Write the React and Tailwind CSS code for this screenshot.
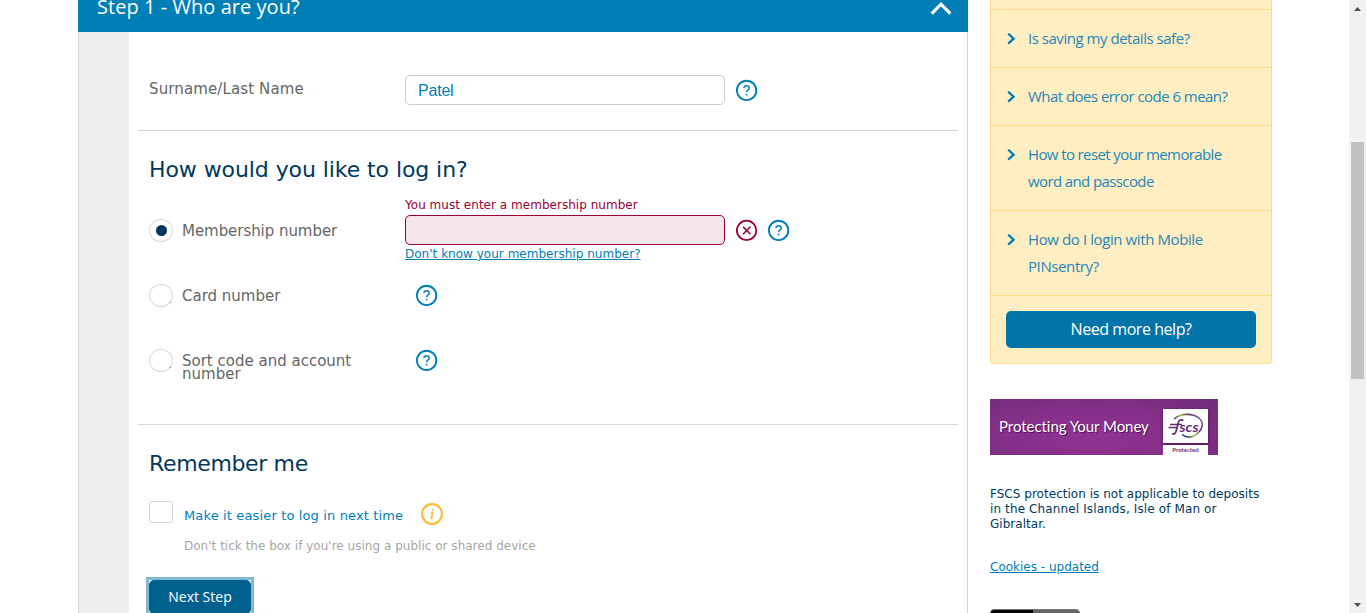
import React from "react";

const VERDANA = "font-['DejaVu_Sans',sans-serif]";
const EXPERT = "font-['Open_Sans',sans-serif]";

function HelpIcon({ className = "" }) {
  return (
    <svg viewBox="0 0 22 22" className={`h-[22px] w-[22px] shrink-0 ${className}`} fill="none" stroke="#007eb6">
      <circle cx="10.6" cy="11.4" r="9.7" strokeWidth="1.9" />
      <path d="M7.900 8.900C8.100 7.400 9.100 6.700 10.500 6.700c1.600 0 2.700.8 2.700 2.200 0 2.100-2.600 2.200-2.600 4.300" strokeWidth="1.5" />
      <path d="M9.800 15.600h1.600" strokeWidth="1.6" />
    </svg>
  );
}

function ErrorIcon() {
  return (
    <svg viewBox="0 0 22 22" className="h-[22px] w-[22px] shrink-0" fill="none" stroke="#990033">
      <circle cx="10.6" cy="11.400" r="9.7" strokeWidth="1.8" />
      <path d="M7 7.800l7.400 7.400M14.400 7.800l-7.400 7.400" strokeWidth="1.6" />
    </svg>
  );
}

function InfoIcon() {
  return (
    <svg viewBox="0 0 22 22" className="h-[22px] w-[22px] shrink-0">
      <circle cx="11" cy="11" r="9.9" strokeWidth="2" fill="none" stroke="#fdb92c" />
      <text x="11" y="15.6" textAnchor="middle" fill="#fdb92c" className="font-['Liberation_Serif',serif] text-[15px] italic" stroke="#fdb92c" strokeWidth=".3">i</text>
    </svg>
  );
}

function Radio({ checked }) {
  return (
    <span className="flex h-[23px] w-6 shrink-0 items-center justify-center rounded-[50%] border border-[#d9d9d9] bg-white">
      {checked && <span className="h-[11px] w-[11px] rounded-full bg-[#00395d]" />}
    </span>
  );
}

function FaqItem({ children, className }) {
  return (
    <li className="flex border-t border-[#ffdb87] pt-[15px] pb-[15px] pl-[15px]">
      <svg viewBox="0 0 10 12" className="mt-2 h-3 w-[10px] shrink-0" fill="none" stroke="#007eb6" strokeWidth="2.3">
        <path d="M2.200 .7L7.600 5.700 2.200 10.700" />
      </svg>
      <span className={`ml-[12px] text-[15px] leading-[27px] whitespace-nowrap text-[#2587b8] ${className}`}>{children}</span>
    </li>
  );
}

export default function App() {
  return (
    <div className={`flex h-[613px] w-[1366px] overflow-hidden bg-white pl-[78px] ${VERDANA}`}>
      <main className="flex h-full w-[890px] shrink-0 flex-col">
        <header className={`flex h-8 shrink-0 justify-between bg-[#007eb6] pr-4 pl-[19px] text-white ${EXPERT}`}>
          <h2 className="-mt-[8px] text-[20px] leading-[30px] font-normal tracking-[0.05px] whitespace-nowrap">Step 1 - Who are you?</h2>
          <svg viewBox="0 0 22 16" className="h-4 w-[22px]" fill="none" stroke="#fff" strokeWidth="3.2">
            <path d="M1.7 13.6L11 4.2l9.3 9.4" />
          </svg>
        </header>
        <div className="flex flex-1 border-x border-[#d5d5d5]">
          <div className="w-[50px] shrink-0 bg-[#ededed]" />
          <div className="flex flex-1 flex-col px-[9px]">
            <section className="flex h-[99px] shrink-0 border-b border-[#d5d5d5] pl-[11px]">
              <label className="mt-[47px] w-64 text-[15px] leading-5 tracking-[0.12px] text-[#666]">Surname/Last Name</label>
              <div className="mt-[43px] h-[30px] w-80 rounded-[5px] border border-[#ccc] pl-3 font-['Liberation_Sans',sans-serif] text-[16px] leading-[29px] tracking-[-0.2px] text-[#007eb6]">Patel</div>
              <HelpIcon className="mt-[47px] ml-[11px]" />
            </section>

            <section className="flex h-[294px] shrink-0 flex-col border-b border-[#d5d5d5] pl-[11px]">
              <h3 className="mt-[24px] text-[22px] leading-[30px] tracking-[-0.08px] text-[#00395d]">How would you like to log in?</h3>
              <div className="mt-[11px] flex h-[65px]">
                <div className="mt-[23px] flex w-64 items-start">
                  <Radio checked />
                  <span className="mt-[2px] ml-[9px] text-[15px] leading-5 tracking-[-0.05px] text-[#666]">Membership number</span>
                </div>
                <div className="flex flex-col">
                  <span className="h-[19px] shrink-0 pt-px text-[12px] leading-[17px] tracking-[0.03px] text-[#990033]">You must enter a membership number</span>
                  <div className="flex shrink-0 items-center">
                    <div className="mr-[11px] h-[30px] w-80 rounded-[5px] border border-[#990033] bg-[#f5e5ea]" />
                    <ErrorIcon />
                    <HelpIcon className="ml-[10px]" />
                  </div>
                  <a className="text-[12px] leading-[18px] tracking-[0.02px] text-[#007eb6] underline">Don't know your membership number?</a>
                </div>
              </div>
              <div className="flex h-[65px] pt-[23px]">
                <div className="flex w-[267px] items-start">
                  <Radio />
                  <span className="-ml-[4px] w-[13px] pt-[13px] text-[8px] leading-[8px] text-[#666]">.</span>
                  <span className="mt-[2px] text-[15px] leading-5 text-[#666]">Card number</span>
                </div>
                <HelpIcon />
              </div>
              <div className="flex h-[65px] pt-[23px]">
                <div className="flex w-[267px] items-start">
                  <Radio />
                  <span className="-ml-[4px] w-[13px] pt-[13px] text-[8px] leading-[8px] text-[#666]">.</span>
                  <span className="mt-[6px] text-[15px] leading-[13px] text-[#666]">Sort code and account<br />number</span>
                </div>
                <HelpIcon />
              </div>
            </section>

            <section className="flex flex-col pl-[11px]">
              <h3 className="mt-[24px] text-[22px] leading-[30px] tracking-[-0.35px] text-[#00395d]">Remember me</h3>
              <div className="mt-[22px] flex h-[22px] items-start">
                <span className="h-[22px] w-6 rounded-[3px] border border-[#d5d5d5]" />
                <span className="mt-[5px] ml-[11px] w-[237px] text-[13px] leading-5 tracking-[0.14px] whitespace-nowrap text-[#007eb6]">Make it easier to log in next time</span>
                <span className="mt-[2px]"><InfoIcon /></span>
              </div>
              <p className="mt-[13px] pl-[35px] text-[12px] leading-5 tracking-[0.02px] text-[#a5a5a5]">Don't tick the box if you're using a public or shared device</p>
              <div className="mt-[24px] h-[34px] w-[102px] bg-white outline-[3px] outline-[#7fb9d3]">
                <button className={`block h-[34px] w-full rounded-[5px] bg-[#00618f] text-[14px] leading-[34px] text-white ${EXPERT}`}>Next Step</button>
              </div>
            </section>
          </div>
        </div>
      </main>

      <aside className="ml-[22px] flex w-[282px] shrink-0 flex-col">
        <div className={`h-[364px] shrink-0 rounded-b-[4px] border border-t-0 border-[#ffdb87] bg-[#ffeec2] pt-[9px] font-normal ${EXPERT}`}>
          <ul>
            <FaqItem className="tracking-[-0.47px]">Is saving my details safe?</FaqItem>
            <FaqItem className="tracking-[-0.54px]">What does error code 6 mean?</FaqItem>
            <FaqItem className="tracking-[-0.61px]">How to reset your memorable<br />word and passcode</FaqItem>
            <FaqItem className="tracking-[-0.4px]">How do I login with Mobile<br />PINsentry?</FaqItem>
          </ul>
          <div className="border-t border-[#ffdb87] px-[15px] pt-[15px]">
            <button className="h-[37px] w-full rounded-[5px] bg-[#0074a8] pb-[2px] text-[16px] font-normal tracking-[-0.45px] text-white">Need more help?</button>
          </div>
        </div>

        <div className="mt-[35px] flex h-14 w-[228px] shrink-0 bg-[radial-gradient(ellipse_at_45%_65%,#8f3393_0%,#87308a_45%,#6f2d79_100%)]">
          <span className="mt-3 w-[173px] pl-[9px] font-['Lato',sans-serif] text-[15px] leading-[30px] tracking-[-0.05px] whitespace-nowrap text-white [text-shadow:1px_1px_1px_#4a1050]">Protecting Your Money</span>
          <div className="flex w-[45px] flex-col pt-[10px]">
            <div className="h-[34px] bg-white shadow-[0_1px_3px_#401045]">
              <svg viewBox="0 0 45 34" className="h-[34px] w-[45px]" fill="none">
                <defs>
                  <linearGradient id="swirl" x1="10" y1="28" x2="38" y2="8" gradientUnits="userSpaceOnUse">
                    <stop stopColor="#315c91" />
                    <stop offset=".3" stopColor="#263c80" />
                    <stop offset=".55" stopColor="#a4c23b" />
                    <stop offset=".75" stopColor="#652c75" />
                    <stop offset="1" stopColor="#8a6b9d" />
                  </linearGradient>
                </defs>
                <path d="M11 10C17 4.500 29 3.500 36 9c5.500 5 3.500 11-1 15-5 4.500-11 5.500-16 1.500" stroke="url(#swirl)" strokeWidth="1.6" />
                <path d="M20.500 11.500c-3-1.500-4.600-.5-5.300 2.500l-1.900 7.500c-.7 3-2 4-4.300 3.200M7 15.500h12M5.500 18.500h9" stroke="#652c75" strokeWidth="1.7" />
                <text x="16.500" y="23" fill="#652c75" textLength="19" lengthAdjust="spacingAndGlyphs" className="font-['Lato',sans-serif] text-[14px] font-bold italic">scs</text>
              </svg>
            </div>
            <div className="mt-[2px] h-[10px] bg-white text-center font-['Lato',sans-serif] text-[6px] leading-[9px] font-bold text-[#652c75]">Protected</div>
          </div>
        </div>

        <p className="mt-[32px] text-[12px] leading-[15px] tracking-[0.03px] whitespace-nowrap text-[#00395d]">
          FSCS protection is not applicable to deposits<br /><span className="tracking-[0.12px]">in the Channel Islands, Isle of Man or</span><br />Gibraltar.
        </p>
        <a className="mt-[28px] text-[12px] leading-[15px] text-[#007eb6] underline">Cookies - updated</a>
        <div className="mt-[34px] flex h-8 w-[90px] shrink-0 overflow-hidden rounded-[4px] border border-[#777] bg-[#666]">
          <div className="w-[42px] bg-black" />
        </div>
      </aside>

      <div className="ml-auto flex w-[17px] shrink-0 flex-col items-center justify-between bg-[#f1f1f1] pt-[7px] pb-[6px]">
        <svg viewBox="0 0 7 4" className="h-1 w-[7px]"><path d="M0 4L3.500 0 7 4z" fill="#505050" /></svg>
        <div className="mt-[131px] mr-px h-[237px] w-[13px] bg-[#c1c1c1]" />
        <svg viewBox="0 0 7 4" className="mt-auto h-1 w-[7px]"><path d="M0 0L3.500 4 7 0z" fill="#505050" /></svg>
      </div>
    </div>
  );
}
